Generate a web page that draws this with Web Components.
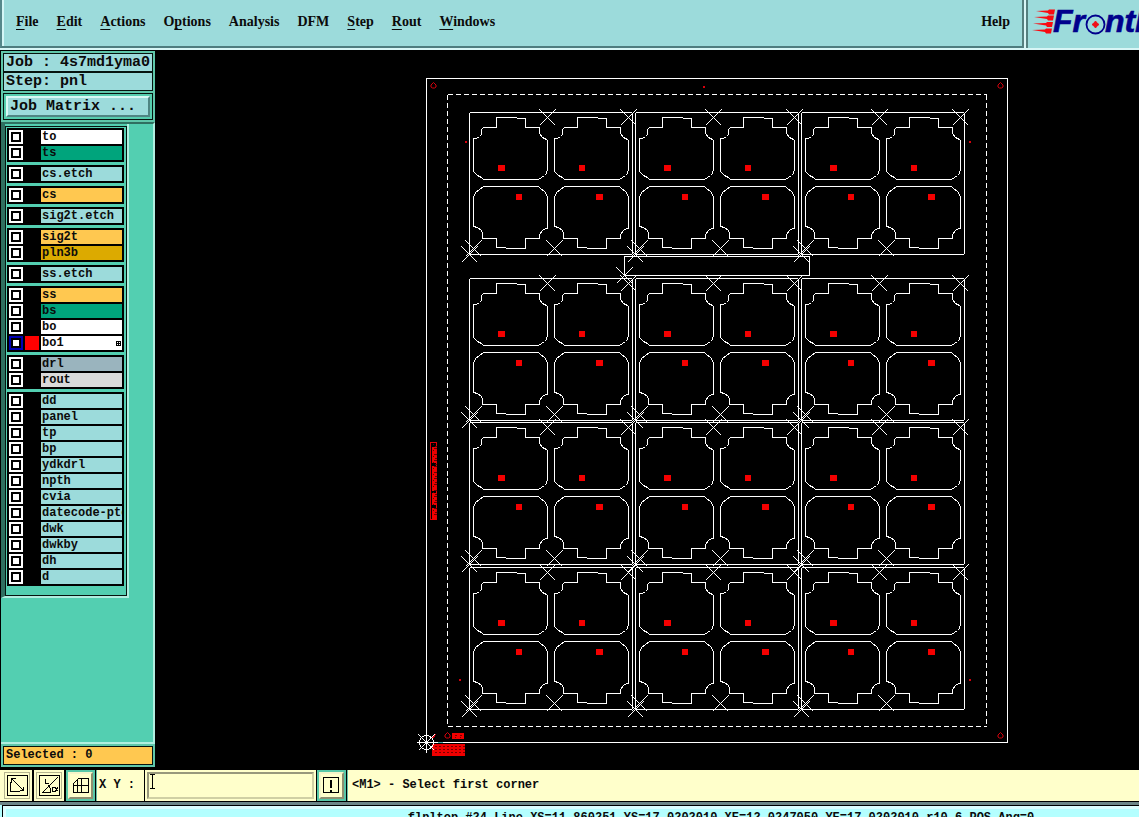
<!DOCTYPE html>
<html lang="en">
<head>
<meta charset="utf-8">
<title>Graphic Editor</title>
<style>
  html, body { margin: 0; height: 100%; background: #000; overflow: hidden; }
  body { font: bold 12px/14px "Liberation Mono", monospace; color: #0b0b0b; }
</style>
</head>
<body>
<graphic-editor></graphic-editor>

<script>
const define = (name, html, setup) => customElements.define(name, class extends HTMLElement {
  constructor() {
    super();
    this.attachShadow({ mode: "open" }).innerHTML = html;
  }
  connectedCallback() { if (setup) setup(this, this.shadowRoot); }
});

define("menu-item", `
<style>
  :host { display: block; }
  button { all: unset; display: block; font: bold 14px/20px "Liberation Serif", serif; white-space: nowrap; }
  u { text-underline-offset: 3px; text-decoration-thickness: 1px; text-decoration-skip-ink: none; }
</style>
<button type="button"></button>`, (el, root) => {
  const parts = el.getAttribute("label").split("_");
  root.querySelector("button").innerHTML = parts.length === 3
    ? parts[0] + "<u>" + parts[1] + "</u>" + parts[2] : parts[0];
});

define("menu-bar", `
<style>
  :host { display: flex; flex: 1; box-sizing: border-box; background: #9cdbdb; padding: 12px 12px 0 14px;
    border-left: 2px solid #55878a; border-right: 2px solid #55807f; border-bottom: 2px solid #4e7d7f;
    box-shadow: inset 2px 0 #d4f6f6; align-items: flex-start; gap: 18px; height: 48px; }
  menu-item:last-child { margin-left: auto; }
</style>
<menu-item label="_F_ile"></menu-item><menu-item label="_E_dit"></menu-item>
<menu-item label="_A_ctions"></menu-item><menu-item label="O_p_tions"></menu-item>
<menu-item label="Analysis"></menu-item><menu-item label="DFM"></menu-item>
<menu-item label="_S_tep"></menu-item><menu-item label="_R_out"></menu-item>
<menu-item label="_W_indows"></menu-item><menu-item label="Help"></menu-item>`);

define("brand-logo", `
<style>
  :host { display: block; flex: none; width: 111px; height: 48px; overflow: hidden; background: #9cdbdb;
    border-left: 2px solid #55807f; }
  svg { display: block; }
  text { font: italic bold 32px "Liberation Sans", sans-serif; fill: #00008c; stroke: #00008c; stroke-width: .6; }
</style>
<svg width="111" height="48" viewBox="1028 0 111 48" role="img" aria-label="Frontline">
  <g fill="#fa0a10">
    <path d="M1036 11l12-.5 1-1h6l-1 5h-5l-1-1.500z"/>
    <path d="M1034 17l13-.5 1-1h6l-1 5h-5l-1-1.500z"/>
    <path d="M1033 23.500l13-.5 1-1h6l-1 5h-5l-1-1.500z"/>
    <path d="M1032 30l13-.5 1-1h6l-1 5h-5l-1-1.500z"/>
  </g>
  <text x="1053" y="32">Fr</text>
  <text x="1105" y="32">nt</text>
  <text x="1135" y="32">l</text>
  <circle cx="1095.500" cy="24.500" r="9" fill="#9cdbdb" stroke="#00008c" stroke-width="1.800"/>
  <path d="M1095.500 21l1.500 2 2 1.500-2 1.500-1.500 2-1.500-2-2-1.500 2-1.500z" fill="#f01018" stroke="#f01018"/>
</svg>`);

define("info-box", `
<style>
  :host { display: block; box-sizing: border-box; border: 1px solid #06140f; background: #9cdbdb;
    padding: 0 2px; font-size: 15px; line-height: 17px; white-space: nowrap; overflow: hidden; }
  :host([kind="selected"]) { background: #ffc850; font-size: 12px; }
</style><slot></slot>`);

define("matrix-button", `
<style>
  :host { display: block; border: 1px solid #06140f; padding: 2px; background: #56cdae; }
  button { display: block; box-sizing: border-box; width: 100%; height: 21px; margin: 0; padding: 0 2px; text-align: left;
    font: bold 15px/17px "Liberation Mono", monospace; color: inherit; background: #9cdbdb; border: 2px solid;
    border-color: #d8f8f4 #4f8583 #4f8583 #d8f8f4; white-space: nowrap; }
</style>
<button type="button"><slot></slot></button>`);

define("layer-row", `
<style>
  :host { display: grid; grid-template-columns: 14px 14px 1fr; gap: 2px; height: 14px; }
  input { appearance: none; margin: 0; width: 14px; height: 14px; box-sizing: border-box; background: #fff;
    border: 2px solid #fff; box-shadow: inset 0 0 0 2px #000; }
  :host([work]) input { border-color: #0000b4; }
  .swatch { background: #000; }
  :host([work]) .swatch { background: #f00; }
  label { display: flex; justify-content: space-between; align-items: center; min-width: 0; overflow: hidden;
    padding: 0 1px; background: var(--tone, #9cdbdb); white-space: nowrap; }
  svg { display: none; flex: none; }
  :host([work]) svg { display: block; }
</style>
<input type="checkbox" id="on"><span class="swatch"></span>
<label for="on"><span></span><svg width="5" height="5" viewBox="0 0 5 5" shape-rendering="crispEdges"><path d="M0 0h5v5H0z"/><path fill="#fff" d="M1 1h1v1H1zM3 1h1v1H3zM1 3h1v1H1zM3 3h1v1H3z"/></svg></label>`,
(el, root) => {
  root.querySelector("label span").textContent = el.getAttribute("name");
  if (el.hasAttribute("tone")) el.style.setProperty("--tone", el.getAttribute("tone"));
});

const LAYERS = [
  [["to", "#fff"], ["ts", "#00a47c"]],
  [["cs.etch"]],
  [["cs", "#ffc850"]],
  [["sig2t.etch"]],
  [["sig2t", "#ffc850"], ["pln3b", "#dcaa00"]],
  [["ss.etch"]],
  [["ss", "#ffc850"], ["bs", "#00a47c"], ["bo", "#fff"], ["bo1", "#fff", "work"]],
  [["drl", "#9ab4be"], ["rout", "#dadada"]],
  ["dd", "panel", "tp", "bp", "ydkdrl", "npth", "cvia", "datecode-pto", "dwk", "dwkby", "dh", "d"].map(n => [n])
];

define("layer-list", `
<style>
  :host { display: block; box-sizing: border-box; width: 128px; padding-top: 2px;
    border: solid; border-width: 0 2px 2px 4px; border-color: #b0efe0 #b0efe0 #b0efe0 #2f6f60; }
  .list { display: flex; flex-direction: column; gap: 3px; border: 1px solid #06140f; padding: 1px 2px 9px 1px; }
  .group { display: flex; flex-direction: column; gap: 2px; padding: 2px; background: #000; }
</style>
<div class="list">${LAYERS.map(g => `<div class="group">${g.map(([n, tone, work]) =>
  `<layer-row name="${n}"${tone ? ` tone="${tone}"` : ""}${work ? " work" : ""}></layer-row>`).join("")}</div>`).join("")}</div>`);

define("side-panel", `
<style>
  :host { display: flex; flex-direction: column; flex: none; box-sizing: border-box; width: 154px;
    margin: 1px 0 3px 1px; padding-top: 2px; background: #5fc7aa; }
  .boxes { display: flex; flex-direction: column; padding: 0 2px; }
  matrix-button { margin: 2px 0; }
  .layers { flex: 1; min-height: 0; background: #53cfb1; border: solid; border-width: 2px 2px 2px 0;
    border-color: #2f6f60 #b0efe0 #b0efe0; }
  .foot { padding: 2px; }
</style>
<div class="boxes">
  <info-box>Job : 4s7md1yma0</info-box>
  <info-box>Step: pnl</info-box>
  <matrix-button>Job Matrix ...</matrix-button>
</div>
<div class="layers"><layer-list></layer-list></div>
<div class="foot"><info-box kind="selected">Selected : 0</info-box></div>`);

const cross = (x, y) => `M${x - 8} ${y - 8}l16 16M${x - 8} ${y + 8}l16 -16`;
const useAt = (id, pts) => pts.map(([x, y]) => `<use href="#${id}" x="${x}" y="${y}"/>`).join("");
const steps = [];
for (const y of [112, 278, 422, 567]) for (const x of [469, 635, 801]) steps.push([x, y]);

let glyphRows = "";
for (let i = 0; i < 36; i++) if (i % 9 !== 4) glyphRows += `M${432 + i * 5 % 3} ${444 + i * 2}h${1 + i * 7 % 3}`;
let tableCells = "";
for (let y = 746; y < 755; y += 3) for (let x = 434; x < 464; x += 4) tableCells += `M${x} ${y}h2`;

define("board-view", `
<style>
  :host { display: block; flex: 1; min-width: 0; min-height: 0; background: #000; overflow: hidden; }
  svg { display: block; width: 100%; height: 100%; }
</style>
<svg viewBox="154.500 49.500 984 720" fill="none" stroke="#fff" shape-rendering="crispEdges" role="img" aria-label="Panel layout">
  <defs>
    <path id="upper" d="M4 59V26H7L10 24 12 22V17L14 15H27V5H47L48 6H56V15H70V21L73 25 77 27 78 28V57L77 61 75 63 72 65 69 67H14L12 65 8 63 5 60Z"/>
    <path id="lower" d="M14 74L10 77 6 80 4 85V114L8 115 12 118 13 121V126H27V135H36L37 136H56V126H70V122L73 118 76 116H78V84L75 79 71 76 69 74Z"/>
    <g id="step">
      <path d="M1 0H162L163 1V141L162 142H1L0 141V1Z"/>
      ${useAt("upper", [[0, 0], [81, 0]])}${useAt("lower", [[0, 0], [81, 0]])}
      <path d="${cross(78, 5)}${cross(159, 5)}${cross(4, 136)}${cross(85, 136)}${cross(0, 142)}"/>
      <path transform="translate(-.5 -.5)" fill="#f40000" stroke="none" d="M29 53h7v6h-7zM110 53h6v6h-6zM47 82h6v6h-6zM127 82h7v6h-7z"/>
    </g>
    <path id="target" stroke="#d8000c" shape-rendering="auto" d="M0 -3L-2.500 -.500V1.500L-1 2.500H1L2.500 1.500V-.500Z"/>
    <path id="dot" stroke="#d8000c" stroke-width="2" d="M-1 0h2"/>
  </defs>
  <path d="M426 78H1007V742H426Z"/>
  <path stroke-dasharray="5 3" d="M447 94H986M447 94V726M986 94V726M447 726H986"/>
  ${useAt("step", steps)}
  <path d="M624 256H809V275H624Z"/>
  <path d="${cross(624, 275)}"/>
  ${useAt("target", [[433, 85], [1000, 85], [447, 735], [1000, 735]])}
  ${useAt("dot", [[465, 141], [969, 141], [459, 679], [969, 679], [703, 86]])}
  <path stroke="#e00008" d="M430 442H436V519H430Z"/>
  <path stroke="#f00000" stroke-width="4" d="M433.500 446V462M433.500 465V490M433.500 492V504M433.500 507V519"/>
  <path stroke="#600" d="${glyphRows}"/>
  <path fill="#f00000" stroke="#f00000" d="M452 733H463V738H452Z"/>
  <path stroke="#700" d="M454 735h2M459 735h2M455 736v1M460 736v1"/>
  <path fill="#f00000" stroke="#f00000" d="M432 744H464V755H432Z"/>
  <path stroke="#700" d="${tableCells}"/>
  <path stroke="#4aa" d="M432 742h10"/>
  <path stroke="#d8000c" d="M431 739l4 -5"/>
  <circle cx="426" cy="742" r="7"/>
  <path d="M416 742H437M426 732V752M418 734L434 750M418 750L434 734"/>
</svg>`);

define("tool-button", `
<style>
  :host { display: flex; flex: none; box-sizing: border-box; width: 32px; border-right: 2px solid #000; }
  button { box-sizing: border-box; width: 100%; height: 31px; margin: 0; padding: 2px; border: 0; background: #ffffcb;
    display: grid; }
  .frame { display: grid; place-items: center; border: 1px solid #b5b590; }
  :host([raised]) { border-right: 1px solid #000; width: 30px; background: #58c8a8; }
  :host([raised]) button { background: #58c8a8; }
  :host([raised]) .frame { background: #ffffcb; border: 2px solid; border-color: #f4f4c8 #8f8f70 #8f8f70 #f4f4c8; }
  svg { display: block; }
</style>
<button type="button"><span class="frame"><svg width="21" height="21" viewBox="-.5 -.5 21 21" fill="none" stroke="#000" shape-rendering="crispEdges"></svg></span></button>`,
(el, root) => {
  const art = {
    corner: "M0 0H20V20H0ZM3 6V16H12M4 3L16 15M4 7V3H8M16 11V15H12",
    angle: "M0 0H20V20H0ZM6 3V8H9M18 2L3 17H11M9 10L11 13V17M16 12H13V16H16L18 12M16 12L18 16",
    grid: "M3 8L8 3H18V17H3ZM11 3V17M3 10H18M7 4V17",
    alert: "M2 2H17V17H2ZM9 4V12M10 4V12M9 14V16M10 14V16"
  }[el.getAttribute("icon")];
  root.querySelector("button").setAttribute("aria-label", el.getAttribute("icon"));
  root.querySelector("svg").innerHTML = `<path d="${art}"/>`;
});

define("command-bar", `
<style>
  :host { display: flex; flex: none; height: 32px; box-sizing: border-box; padding-left: 2px; background: #ffffcb;
    border-bottom: 1px solid #000; align-items: stretch; }
  label { flex: none; box-sizing: border-box; width: 48px; padding: 8px 0 0 2px; border-left: 1px solid #66bfa5; white-space: nowrap; }
  .field { position: relative; flex: none; display: flex; box-sizing: border-box; width: 173px; padding: 2px;
    border: solid #000; border-width: 0 1px; }
  input { box-sizing: border-box; width: 100%; min-width: 0; margin: 0; padding: 0 4px; background: #ffffcb; font: inherit; outline: 0;
    border: 2px solid; border-color: #98987c #d0d0a4 #d0d0a4 #98987c; }
  .field svg { position: absolute; left: 5px; top: 4px; }
  .prompt { flex: 1; min-width: 0; padding: 8px 0 0 4px; border-left: 1px solid #66bfa5; white-space: nowrap; overflow: hidden; }
</style>
<tool-button icon="corner"></tool-button>
<tool-button icon="angle"></tool-button>
<tool-button icon="grid" raised></tool-button>
<label for="xy">X Y :</label>
<div class="field"><input id="xy" type="text">
  <svg width="5" height="15" viewBox="0 0 5 15" shape-rendering="crispEdges" aria-hidden="true"><path d="M0 0h5v1H3v13h2v1H0v-1h2V1H0z"/></svg>
</div>
<tool-button icon="alert" raised></tool-button>
<div class="prompt">&lt;M1&gt; - Select first corner</div>`);

define("status-line", `
<style>
  :host { display: block; flex: none; height: 15px; box-sizing: border-box; overflow: hidden; background: #b4ffff;
    border-top: 3px solid #6d8788; padding-left: 2px; }
  div { border-top: 1px solid #000; border-left: 1px solid #000; box-shadow: inset 3px 3px #dcffff;
    padding: 5px 0 0 300px; text-align: center; white-space: nowrap; }
</style>
<div><slot></slot></div>`);

define("graphic-editor", `
<style>
  :host { display: flex; flex-direction: column; height: 100vh; overflow: hidden; }
  header { display: flex; flex: none; gap: 2px; border-bottom: 2px solid #d8f6f6; background: #d8f6f6; }
  main { display: flex; flex: 1; min-height: 0; }
</style>
<header><menu-bar></menu-bar><brand-logo></brand-logo></header>
<main><side-panel></side-panel><board-view></board-view></main>
<command-bar></command-bar>
<status-line>flpltop #24 Line XS=11.860251 YS=17.0202010 XE=12.0247050 YE=17.0202010 r10.6 POS Ang=0</status-line>`);
</script>
</body>
</html>
